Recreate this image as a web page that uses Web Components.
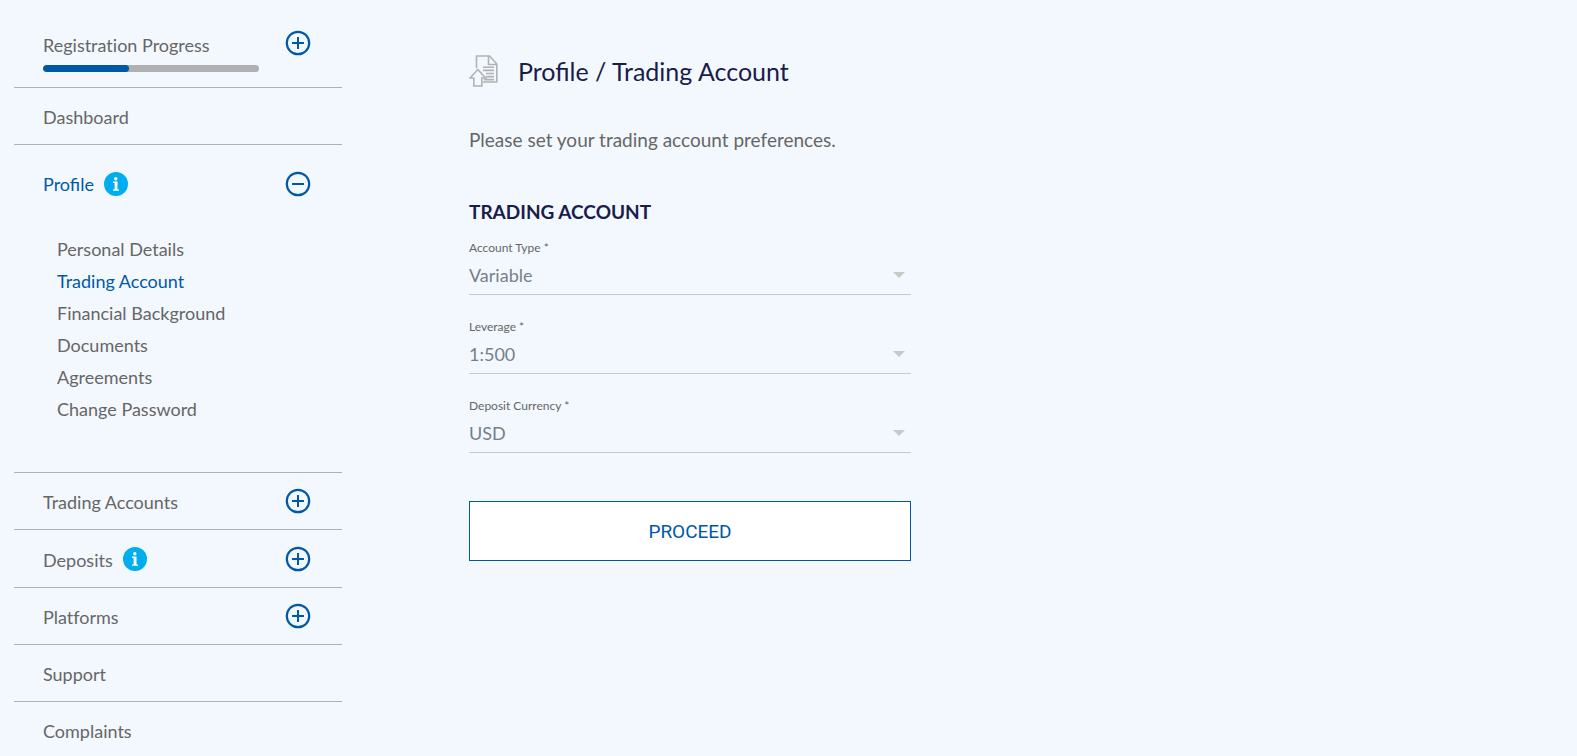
<!DOCTYPE html>
<html lang="en">
<head>
<meta charset="utf-8">
<meta name="viewport" content="width=device-width, initial-scale=1">
<title>Profile / Trading Account</title>
<style>
html, body { margin: 0; min-height: 100%; background: #f3f8fe; }
body { font-family: Lato, "Open Sans", sans-serif; font-size: 18px; line-height: 24px; color: #666; overflow-x: hidden; }
</style>
</head>
<body>
<client-portal></client-portal>
<script>
const define = (name, html, setup) => {
  customElements.define(name, class extends HTMLElement {
    constructor() {
      super();
      this.attachShadow({ mode: 'open' }).innerHTML = html;
    }
    connectedCallback() { if (setup) setup(this, this.shadowRoot); }
  });
};

define('info-badge', `
<style>
:host { display: block; width: 24px; height: 24px; }
svg { display: block; }
</style>
<svg width="24" height="24" viewBox="0 0 24 24" role="img" aria-label="Information">
  <circle cx="12" cy="12" r="12" fill="#00aeef"/>
  <circle cx="11.800" cy="6.700" r="1.700" fill="#fff"/>
  <path d="M9 9.600h4.500v7.800h1.500v1.400H9v-1.400h1.600v-6.400H9z" fill="#fff"/>
</svg>`);

define('toggle-button', `
<style>
:host { display: block; }
button { display: block; padding: 0; border: 0; background: none; cursor: pointer; }
svg { display: block; }
:host([open]) .bar { display: none; }
</style>
<button type="button">
  <svg width="26" height="26" viewBox="0 0 26 26" fill="none" stroke="#0058a8" aria-hidden="true">
    <circle cx="13" cy="13" r="11.200" stroke-width="2.200"/>
    <path d="M7 13h12" stroke-width="2"/>
    <path class="bar" d="M13 7v12" stroke-width="2"/>
  </svg>
</button>`, (host, root) => {
  const b = root.querySelector('button');
  b.setAttribute('aria-label', 'Toggle ' + host.getAttribute('label'));
  b.setAttribute('aria-expanded', host.hasAttribute('open'));
});

define('progress-bar', `
<style>
:host { display: block; height: 7px; border-radius: 4px; background: #aeb0b2; overflow: hidden; }
div { height: 100%; border-radius: 4px; background: #0058a8; }
</style>
<div role="progressbar" aria-label="Registration progress"></div>`, (host, root) => {
  const d = root.querySelector('div');
  d.style.width = host.getAttribute('value') + '%';
  d.setAttribute('aria-valuenow', host.getAttribute('value'));
});

define('nav-section', `
<style>
:host { display: block; border-bottom: 1px solid #aeb0b2; }
:host(:last-child) { border-bottom: 0; }
.row { display: flex; align-items: center; gap: 10px; height: 56px; padding: 0 31px 0 29px; }
:host([badge]) .row { height: 57px; }
:host([open]) .row { height: 78px; }
.label { padding-top: 2px; }
a { color: inherit; text-decoration: none; }
:host([open]) a { color: #0058a8; font-variant-ligatures: normal; }
:host([open]) .label { padding-top: 0; }
toggle-button { margin-left: auto; }
</style>
<div class="row"><span class="label"><a href="#"></a></span></div>
<slot></slot>`, (host, root) => {
  const row = root.querySelector('.row');
  const label = host.getAttribute('label');
  root.querySelector('a').textContent = label;
  if (host.hasAttribute('badge')) row.append(document.createElement('info-badge'));
  if (host.hasAttribute('toggle')) {
    const t = document.createElement('toggle-button');
    t.setAttribute('label', label);
    if (host.hasAttribute('open')) t.setAttribute('open', '');
    row.append(t);
  }
});

define('sub-link', `
<style>
:host { display: block; line-height: 32px; }
a { color: inherit; text-decoration: none; }
:host([current]) a { color: #0058a8; }
</style>
<a href="#"><slot></slot></a>`);

define('registration-status', `
<style>
:host { display: flex; gap: 26px; align-items: flex-start; height: 57px; padding: 30px 31px 0 29px; border-bottom: 1px solid #aeb0b2; }
.text { flex: 1; display: grid; gap: 8px; padding-top: 3px; }
a { color: inherit; text-decoration: none; }
</style>
<div class="text"><a href="#">Registration Progress</a><progress-bar value="40"></progress-bar></div>
<toggle-button label="Registration Progress"></toggle-button>`);

define('side-nav', `
<style>
:host { display: block; font-variant-ligatures: none; }
.sub { padding: 10px 43px 47px; }
</style>
<nav aria-label="Account">
  <registration-status></registration-status>
  <nav-section label="Dashboard"></nav-section>
  <nav-section label="Profile" badge toggle open>
    <div class="sub">
      <sub-link>Personal Details</sub-link>
      <sub-link current>Trading Account</sub-link>
      <sub-link>Financial Background</sub-link>
      <sub-link>Documents</sub-link>
      <sub-link>Agreements</sub-link>
      <sub-link>Change Password</sub-link>
    </div>
  </nav-section>
  <nav-section label="Trading Accounts" toggle></nav-section>
  <nav-section label="Deposits" badge toggle></nav-section>
  <nav-section label="Platforms" toggle></nav-section>
  <nav-section label="Support"></nav-section>
  <nav-section label="Complaints"></nav-section>
</nav>`);

define('page-title', `
<style>
:host { display: flex; align-items: center; gap: 20px; color: #1a1c4b; }
svg { flex: none; }
h1 { margin: 0; font-size: 25px; line-height: 32px; font-weight: 400; white-space: nowrap; }
</style>
<svg width="29" height="32" viewBox="0 0 29 32" fill="none" stroke="#b0b2b3" stroke-width="1.600" aria-hidden="true">
  <path d="M7.500 13V1h13l7.300 8v18H14"/>
  <path d="M19.500 1v8.500h8"/>
  <path d="M14 12.300h11M14 15.400h11M17 18.500h8M17 21.600h8M15 24.600h10"/>
  <path d="M8.800 14.500L1 23h3.800v8h8v-8h3.800z"/>
</svg>
<h1><slot></slot></h1>`);

define('select-field', `
<style>
:host { display: block; height: 79px; }
label { display: block; font-size: 12px; line-height: 16px; }
.box { display: grid; align-items: center; border-bottom: 1px solid #c8cac8; }
select, svg { grid-area: 1 / 1; }
select { appearance: none; width: 100%; height: 38px; margin: 0; padding: 0; border: 0; border-radius: 0; background: none; font: inherit; color: #75808a; }
svg { justify-self: end; margin-right: 6px; pointer-events: none; }
</style>
<label for="control"></label>
<div class="box">
  <select id="control"><option></option></select>
  <svg width="12" height="6" viewBox="0 0 12 6" aria-hidden="true"><path d="M0 0h12L6 6z" fill="#c8cac8"/></svg>
</div>`, (host, root) => {
  root.querySelector('label').textContent = host.getAttribute('label') + ' *';
  root.querySelector('option').textContent = host.getAttribute('value');
});

define('action-button', `
<style>
:host { display: block; }
button { display: block; width: 100%; height: 60px; padding: 0; border: 1px solid #0058a8; background: #fff; color: #0058a8; font-family: Roboto, sans-serif; font-size: 19px; cursor: pointer; }
</style>
<button type="submit"><slot></slot></button>`);

define('account-form', `
<style>
:host { display: block; max-width: 442px; }
p { margin: 0; padding: 41px 0 46px; font-size: 19px; }
h2 { margin: 0; font-size: 19px; line-height: 28px; font-weight: 700; color: #1a1c4b; }
.fields { padding: 14px 0 24px; }
</style>
<page-title>Profile / Trading Account</page-title>
<p>Please set your trading account preferences.</p>
<form>
  <h2>TRADING ACCOUNT</h2>
  <div class="fields">
    <select-field label="Account Type" value="Variable"></select-field>
    <select-field label="Leverage" value="1:500"></select-field>
    <select-field label="Deposit Currency" value="USD"></select-field>
  </div>
  <action-button>PROCEED</action-button>
</form>`);

define('client-portal', `
<style>
:host { display: grid; grid-template-columns: minmax(240px, 328px) minmax(0, 1fr); column-gap: 127px; padding-left: 14px; align-items: start; }
main { display: grid; grid-template-columns: minmax(280px, 2fr) 3fr; padding-top: 55px; }
</style>
<side-nav></side-nav>
<main><account-form></account-form></main>`);
</script>
</body>
</html>
